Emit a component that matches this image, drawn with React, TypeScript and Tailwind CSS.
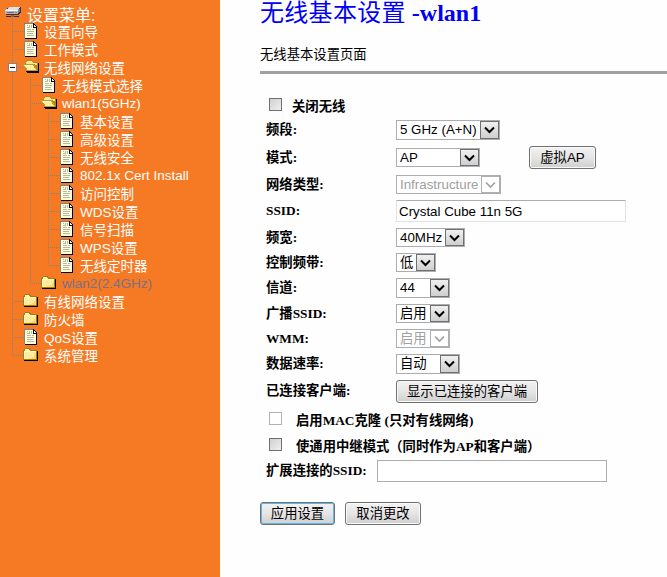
import type { ReactNode } from "react";

type IconKind = "page" | "folder" | "open";
type Guide = "line" | "tee" | "end" | "minus";
type Node = { label: string; icon: IconKind; guides: Guide[]; visited?: boolean };

const NODES: Node[] = [
  { label: "设置向导", icon: "page", guides: ["tee"] },
  { label: "工作模式", icon: "page", guides: ["tee"] },
  { label: "无线网络设置", icon: "open", guides: ["minus"] },
  { label: "无线模式选择", icon: "page", guides: ["line", "tee"] },
  { label: "wlan1(5GHz)", icon: "open", guides: ["line", "tee"] },
  { label: "基本设置", icon: "page", guides: ["line", "line", "tee"] },
  { label: "高级设置", icon: "page", guides: ["line", "line", "tee"] },
  { label: "无线安全", icon: "page", guides: ["line", "line", "tee"] },
  { label: "802.1x Cert Install", icon: "page", guides: ["line", "line", "tee"] },
  { label: "访问控制", icon: "page", guides: ["line", "line", "tee"] },
  { label: "WDS设置", icon: "page", guides: ["line", "line", "tee"] },
  { label: "信号扫描", icon: "page", guides: ["line", "line", "tee"] },
  { label: "WPS设置", icon: "page", guides: ["line", "line", "tee"] },
  { label: "无线定时器", icon: "page", guides: ["line", "line", "end"] },
  { label: "wlan2(2.4GHz)", icon: "folder", guides: ["line", "end"], visited: true },
  { label: "有线网络设置", icon: "folder", guides: ["tee"] },
  { label: "防火墙", icon: "folder", guides: ["tee"] },
  { label: "QoS设置", icon: "page", guides: ["tee"] },
  { label: "系统管理", icon: "folder", guides: ["end"] },
];

const GUIDE_COLOR = "#848284";

function GuideCell({ kind }: { kind: Guide }) {
  const down = kind === "end" ? [0, 2, 4, 6, 8] : [0, 2, 4, 6, 8, 10, 12, 14, 16];
  const across = kind === "line" ? [] : [11, 13, 15, 17, 19];
  return (
    <svg width="18" height="18" viewBox="0 0 18 18" className="shrink-0 overflow-visible" shapeRendering="crispEdges">
      {down.map((y) => (
        <rect key={`v${y}`} x="9" y={y} width="1" height="1" fill={GUIDE_COLOR} />
      ))}
      {across.map((x) => (
        <rect key={`h${x}`} x={x} y="8" width="1" height="1" fill={GUIDE_COLOR} />
      ))}
      {kind === "minus" && (
        <>
          <rect x="5" y="4" width="9" height="9" fill="#848284" />
          <rect x="6" y="5" width="7" height="7" fill="#fff" />
          <rect x="7" y="8" width="5" height="1" fill="#000" />
        </>
      )}
    </svg>
  );
}

function PageIcon() {
  return (
    <svg width="14" height="18" viewBox="0 0 14 18" className="ml-px shrink-0" shapeRendering="crispEdges">
      <path d="M1 1H9V4H12V15H1Z" fill="#ffffd6" />
      <path d="M0 0H9V1H1V15H0Z" fill="#848284" />
      <path d="M9 0H10V1H11V2H12V3H13V16H1V15H12V5H9Z" fill="#000" />
      <path d="M10 2H11V3H12V4H10Z" fill="#fff" />
      <path
        d="M3 2H4V3H3ZM5 2H6V4H5ZM7 2H8V5H7ZM3 4H6V5H3ZM3 6H7V7H3ZM8 6H10V7H8ZM3 8H10V9H3ZM3 10H9V11H3ZM3 12H10V13H3Z"
        fill="#b5b6b0"
      />
    </svg>
  );
}

function FolderIcon({ open }: { open: boolean }) {
  return open ? (
    <svg width="17" height="18" viewBox="0 0 17 18" className="shrink-0" shapeRendering="crispEdges">
      <path d="M3 12H15V4H16V14H4V13H3Z" fill="#000" />
      <path d="M2 3H3V2H4V1H9V2H10V3H15V12H3V11H2V9H1V6H2Z" fill="#b58618" />
      <path d="M4 2H9V3H10V4H14V6H12V5H3V3H4Z" fill="#ffe78c" />
      <path d="M1 5H11V6H12V8H13V10H14V12H3V10H2V8H1V7H0V5Z" fill="#c69a28" />
      <path d="M1 6H10V7H11V9H12V10H13V11H4V9H3V7H1Z" fill="#ffeb9c" />
      <path d="M2 6H10V7H3V8H2Z" fill="#fffbd6" />
    </svg>
  ) : (
    <svg width="16" height="18" viewBox="0 0 16 18" className="shrink-0" shapeRendering="crispEdges">
      <path d="M1 14H15V4H14V13H1Z" fill="#000" />
      <path d="M0 3H1V2H2V1H7V2H8V3H14V13H0Z" fill="#a57d08" />
      <path d="M1 4H2V2H6V3H7V4H13V12H1Z" fill="#ffeb9c" />
      <path d="M2 2H6V3H2ZM1 4H13V5H2V12H1Z" fill="#fffbce" />
      <path d="M12 6H13V12H6V11H9V10H11V8H12Z" fill="#f7d77b" />
    </svg>
  );
}

function RouterIcon() {
  return (
    <svg width="17" height="18" viewBox="0 0 17 18" className="shrink-0" shapeRendering="crispEdges">
      <path d="M4 1H16V7H15V8H14V9H1V8H0V4H1V3H2V2H4Z" fill="#31304a" />
      <path d="M4 1H15V2H14V3H13V4H1V3H3V2H4Z" fill="#dedfe7" />
      <path d="M0 4H13V8H0Z" fill="#b5b2bd" />
      <path d="M0 4H13V5H0Z" fill="#fff" />
      <path d="M13 3H15V6H14V7H13Z" fill="#7b7994" />
      <path d="M2 6H9V7H2Z" fill="#6b6984" />
      <path d="M10 6H12V7H10Z" fill="#42b542" />
      <path d="M1 10H6V11H1ZM9 10H14V11H9Z" fill="#29306b" />
      <path d="M6 9H9V11H6Z" fill="#c65510" />
      <path d="M7 11h1v1h-1zM7 13h1v1h-1zM7 15h1v1h-1z" fill={GUIDE_COLOR} />
    </svg>
  );
}

function Sidebar() {
  return (
    <nav className="h-[577px] w-[220px] shrink-0 bg-[#f67a23] pt-[6px] font-['Liberation_Sans','Noto_Sans_CJK_SC',sans-serif] text-white">
      <div className="flex h-[17px] items-start pl-[5px]">
        <RouterIcon />
        <span className="ml-[5px] whitespace-nowrap text-[16px] leading-[19px]">设置菜单:</span>
      </div>
      {NODES.map((node) => (
        <div key={node.label} className="flex h-[18px] items-start pl-[3px]">
          {node.guides.map((kind, i) => (
            <GuideCell key={i} kind={kind} />
          ))}
          <span className="flex w-[23px] shrink-0 pl-[2px]">
            {node.icon === "page" ? <PageIcon /> : <FolderIcon open={node.icon === "open"} />}
          </span>
          <a
            className={`whitespace-nowrap text-[13.5px] ${/[\u4e00-\u9fff]/.test(node.label) ? "leading-[20px]" : "leading-[18px]"} ${node.visited ? "text-[#7b7088]" : ""}`}
          >
            {node.label}
          </a>
        </div>
      ))}
    </nav>
  );
}

function Select({ value, className, disabled = false }: { value: string; className: string; disabled?: boolean }) {
  return (
    <div
      role="combobox"
      className={`flex shrink-0 justify-between border border-[#abadb3] bg-white pl-[3px] font-['Liberation_Sans','Noto_Sans_CJK_SC',sans-serif] text-[13.33px] font-normal leading-[18px] ${disabled ? "text-[#a0a0a0]" : "text-black"} ${className}`}
    >
      <span className="whitespace-nowrap">{value}</span>
      <span
        className={`flex w-[19px] shrink-0 items-center justify-center border ${disabled ? "border-[#b0b0b0] bg-white" : "border-[#707070] bg-linear-to-b from-[#f0f0f0] to-[#cfcfcf]"}`}
      >
        <svg width="11" height="8" viewBox="0 0 11 8" fill="none">
          <path d="M1 1.5L5.5 6L10 1.5" stroke={disabled ? "#a0a0a0" : "#000"} strokeWidth={disabled ? 1.7 : 2} />
        </svg>
      </span>
    </div>
  );
}

function Button({ children, className, focused = false }: { children: ReactNode; className: string; focused?: boolean }) {
  return (
    <button
      className={`h-[23px] shrink-0 whitespace-nowrap rounded-[3px] border border-[#707070] bg-linear-to-b from-[#f3f3f3] via-[#e6e4e4] to-[#cfcfcf] text-center font-['Liberation_Sans','Noto_Sans_CJK_SC',sans-serif] text-[13.33px] font-normal leading-[20px] text-black ${focused ? "shadow-[inset_0_0_0_1px_#5fb8ea]" : "shadow-[inset_0_0_0_1px_#fafafa]"} ${className}`}
    >
      {children}
    </button>
  );
}

function Checkbox({ disabled = false }: { disabled?: boolean }) {
  return (
    <span
      role="checkbox"
      aria-checked="false"
      className={`ml-[3px] size-[13px] shrink-0 border ${disabled ? "border-[#b1b1b1] bg-white" : "border-[#707070] bg-linear-to-br from-[#d2d0d0] to-[#efefef]"}`}
    />
  );
}

function Row({ label, className, children }: { label: string; className: string; children: ReactNode }) {
  return (
    <div className={`flex items-start ${className}`}>
      <label className="w-[130px] shrink-0 whitespace-nowrap leading-[20px]">{label}</label>
      {children}
    </div>
  );
}

export default function App() {
  return (
    <div className="flex h-[577px] w-[667px] overflow-hidden bg-[#fefefe]">
      <Sidebar />
      <main className="min-w-0 flex-1 pl-[40px] font-['Liberation_Serif','Noto_Sans_CJK_SC',serif] text-black">
        <h1 className="h-[44px] whitespace-nowrap text-[24px] leading-[27px] text-[#0000f5]">
          <span className="font-normal tracking-[0.3px]">无线基本设置</span>
          <span className="font-bold"> -wlan1</span>
        </h1>
        <p className="h-[27px] whitespace-nowrap text-[13.33px] leading-[21px]">无线基本设置页面</p>
        <div className="h-[3px] bg-[#a0a0a0]" />
        <form className="pl-[6px] pt-[21px] text-[13.33px] font-bold">
          <div className="flex h-[25px] items-start pt-[3px]">
            <Checkbox />
            <span className="-mt-px ml-[10px] leading-[20px]">关闭无线</span>
          </div>
          <Row label="频段:" className="h-[28px]">
            <Select value="5 GHz (A+N)" className="h-[20px] w-[104px]" />
          </Row>
          <Row label="模式:" className="h-[27px]">
            <Select value="AP" className="h-[19px] w-[84px]" />
            <Button className="-mt-[2px] ml-[49px] w-[67px]">虚拟AP</Button>
          </Row>
          <Row label="网络类型:" className="h-[26px]">
            <Select value="Infrastructure" disabled className="h-[19px] w-[105px]" />
          </Row>
          <Row label="SSID:" className="h-[27px]">
            <div className="-mt-px h-[22px] w-[230px] border border-[#e2e3ea] border-t-[#abadb3] bg-white pl-[2px] font-['Liberation_Sans',sans-serif] font-normal leading-[21px]">
              Crystal Cube 11n 5G
            </div>
          </Row>
          <Row label="频宽:" className="h-[25px]">
            <Select value="40MHz" className="h-[19px] w-[69px]" />
          </Row>
          <Row label="控制频带:" className="h-[25px]">
            <Select value="低" className="h-[19px] w-[40px]" />
          </Row>
          <Row label="信道:" className="h-[26px]">
            <Select value="44" className="h-[20px] w-[54px]" />
          </Row>
          <Row label="广播SSID:" className="h-[25px]">
            <Select value="启用" className="h-[19px] w-[54px]" />
          </Row>
          <Row label="WMM:" className="h-[25px]">
            <Select value="启用" disabled className="h-[19px] w-[54px]" />
          </Row>
          <Row label="数据速率:" className="h-[27px]">
            <Select value="自动" className="h-[20px] w-[64px]" />
          </Row>
          <Row label="已连接客户端:" className="h-[31px]">
            <Button className="-mt-px w-[142px]">显示已连接的客户端</Button>
          </Row>
          <div className="flex h-[26px] items-start whitespace-nowrap">
            <Checkbox disabled />
            <span className="-mt-px ml-[14px] leading-[20px]">启用MAC克隆 (只对有线网络)</span>
          </div>
          <div className="flex h-[22px] items-start whitespace-nowrap">
            <Checkbox />
            <span className="-mt-px ml-[14px] leading-[20px]">使通用中继模式（同时作为AP和客户端）</span>
          </div>
          <div className="flex h-[42px] items-start whitespace-nowrap">
            <label className="w-[111px] shrink-0 leading-[21px]">扩展连接的SSID:</label>
            <div className="h-[22px] w-[230px] border border-[#abadb3] bg-white" />
          </div>
          <div className="-ml-[6px] flex gap-[10px] font-normal">
            <Button focused className="w-[75px]">应用设置</Button>
            <Button className="w-[76px]">取消更改</Button>
          </div>
        </form>
      </main>
    </div>
  );
}
